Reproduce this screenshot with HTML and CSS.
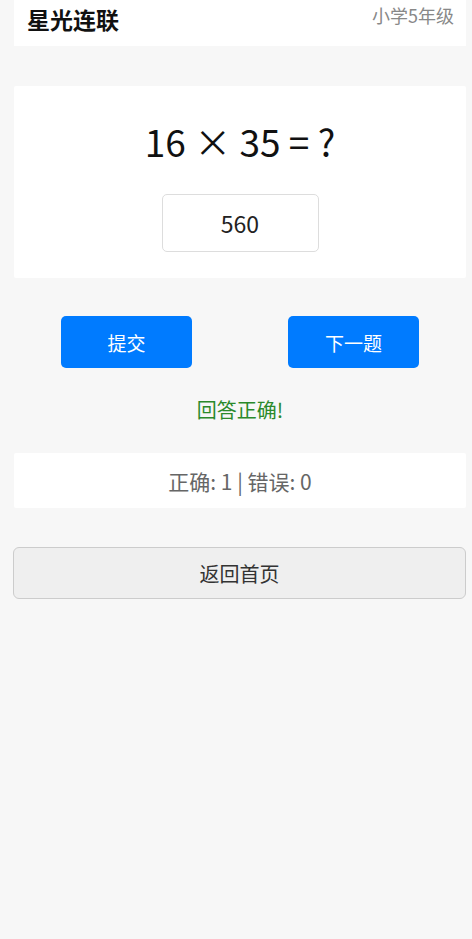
FILE: index.html
```html
<!DOCTYPE html>
<html lang="zh-CN">
<head>
    <meta charset="UTF-8">
    <meta name="viewport" content="width=device-width, initial-scale=1.0">
    <title>星光连联 - 乘法练习</title>
    <link rel="stylesheet" href="styles.css">
</head>
<body>
    <!-- 顶部栏 -->
    <div class="header">
        <h1 class="app-title">星光连联</h1>
        <span class="grade">小学5年级</span>
    </div>

    <!-- 题目 -->
    <div class="card question-card">
        <div class="question">16 × 35 = ?</div>
        <input class="answer-input" type="text" value="560">
    </div>

    <div class="actions">
        <button class="btn-primary">提交</button>
        <button class="btn-primary">下一题</button>
    </div>

    <div class="feedback">回答正确!</div>

    <div class="card stats">正确: 1 | 错误: 0</div>

    <button class="back-button">返回首页</button>
</body>
</html>
```

FILE: styles.css
```css
:root {
    --bg-color: #f7f7f7;
    --card-color: #fff;
    --primary: #007bff;
    --success: #2b8a2b;
}

* {
    margin: 0;
    padding: 0;
    box-sizing: border-box;
}

body {
    background-color: var(--bg-color);
    font-family: "Noto Sans CJK SC", "Noto Sans", sans-serif;
    color: #222;
    width: 472px;
    min-height: 939px;
    padding: 0 6px 0 14px;
}

.header {
    background-color: var(--card-color);
    height: 46px;
    display: flex;
    justify-content: space-between;
    align-items: flex-start;
    padding: 0 12px 0 13px;
}

.app-title {
    font-size: 23px;
    font-weight: bold;
    color: #111;
    line-height: 38px;
}

.grade {
    font-size: 18px;
    color: #888;
    line-height: 30px;
}

.card {
    background-color: var(--card-color);
    border-radius: 2px;
}

.question-card {
    margin-top: 40px;
    height: 192px;
    display: flex;
    flex-direction: column;
    align-items: center;
    padding-top: 27px;
}

.question {
    font-size: 37px;
    line-height: 56px;
    color: #111;
}

.answer-input {
    margin-top: 25px;
    width: 157px;
    height: 58px;
    border: 1px solid #ddd;
    border-radius: 5px;
    text-align: center;
    font-family: inherit;
    font-size: 23px;
    color: #222;
    outline: none;
}

.actions {
    display: flex;
    justify-content: space-between;
    padding: 0 47px;
    margin-top: 38px;
}

.btn-primary {
    width: 131px;
    height: 52px;
    background-color: var(--primary);
    color: #fff;
    border: none;
    border-radius: 5px;
    font-family: inherit;
    font-size: 19px;
}

.feedback {
    text-align: center;
    color: var(--success);
    font-size: 20px;
    line-height: 28px;
    margin-top: 28px;
}

.stats {
    margin-top: 29px;
    height: 55px;
    display: flex;
    align-items: center;
    justify-content: center;
    font-size: 21px;
    color: #666;
}

.back-button {
    display: block;
    width: 453px;
    margin: 39px 0 0 -1px;
    height: 52px;
    background-color: #efefef;
    border: 1px solid #ccc;
    border-radius: 6px;
    font-family: inherit;
    font-size: 20px;
    color: #333;
}
```
